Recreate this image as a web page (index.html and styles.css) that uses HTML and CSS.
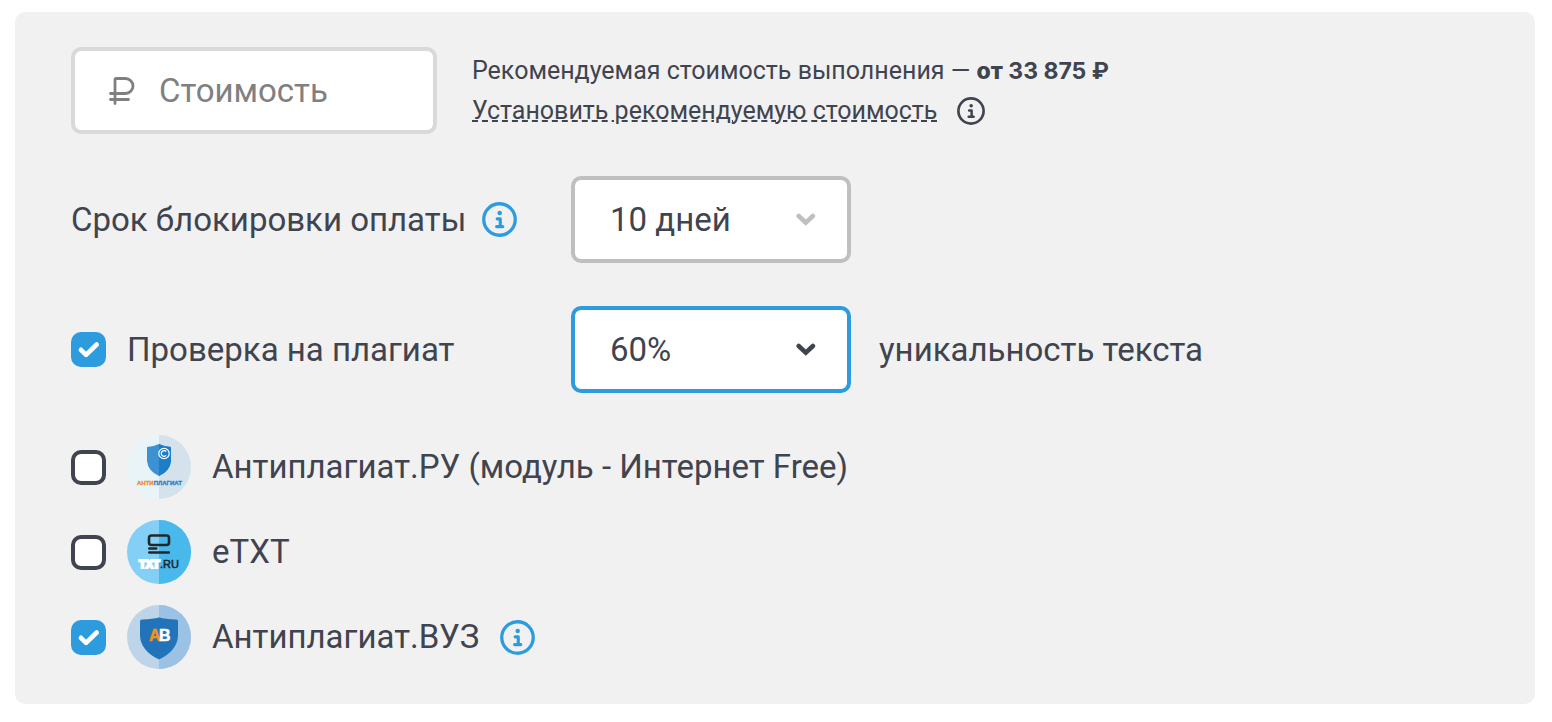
FILE: index.html
```
<!DOCTYPE html>
<html lang="ru">
  <head>
    <meta charset="UTF-8">
    <meta name="viewport" content="width=device-width, initial-scale=1">
    <title>Стоимость и проверка</title>
    <link rel="stylesheet" href="styles.css">
  </head>
  <body>
  <svg class="sprite" aria-hidden="true">
    <symbol id="info" viewBox="0 0 36 36">
      <circle cx="18" cy="18" r="16.200" fill="none" stroke="currentColor" stroke-width="3.400"/>
      <circle cx="18.200" cy="11.300" r="2.300" fill="currentColor"/>
      <path d="M15.600 17.300h3.200v7.500M15 25.300h6.400" fill="none" stroke="currentColor" stroke-width="3.200" stroke-linecap="round" stroke-linejoin="round"/>
    </symbol>
    <symbol id="arrow" viewBox="0 0 20 13">
      <path d="M2.700 3l7.100 6.600 7.100-6.600" fill="none" stroke="currentColor" stroke-width="4.600" stroke-linecap="round"/>
    </symbol>
    <symbol id="tick" viewBox="0 0 36 36">
      <path d="M10.200 18.300l5.300 5.200 10.900-10.600" fill="none" stroke="#fff" stroke-width="4.800" stroke-linecap="round" stroke-linejoin="round"/>
    </symbol>
  </svg>

  <form class="panel">
    <div class="row row-price">
      <label class="price-field">
        <svg class="rub" viewBox="0 0 26 28" aria-hidden="true">
          <path d="M6 26.500V2.500q0-1 1-1h9.500a7.500 7.500 0 0 1 0 15H1.500M1.500 22.500h18" fill="none" stroke="currentColor" stroke-width="2.800" stroke-linecap="round"/>
        </svg>
        <input class="price-input" type="text" placeholder="Стоимость" aria-label="Стоимость">
      </label>
      <div class="hint">
        <div>Рекомендуемая стоимость выполнения — <span class="sum"><b>от</b> 33 875 ₽</span></div>
        <div class="hint-line">
          <a class="hint-link" href="#">Установить рекомендуемую стоимость</a>
          <button class="info info-small" type="button" aria-label="Подробнее"><svg><use href="#info"/></svg></button>
        </div>
      </div>
    </div>

    <div class="row row-days">
      <div class="caption caption-info">
        <label for="days">Срок блокировки оплаты</label>
        <button class="info" type="button" aria-label="Подробнее"><svg><use href="#info"/></svg></button>
      </div>
      <div class="drop">
        <select id="days"><option>10 дней</option></select>
        <svg class="arrow"><use href="#arrow"/></svg>
      </div>
    </div>

    <div class="row row-check">
      <div class="caption">
        <span class="check">
          <input type="checkbox" id="plagiat" checked>
          <svg><use href="#tick"/></svg>
        </span>
        <label for="plagiat">Проверка на плагиат</label>
      </div>
      <div class="drop active">
        <select id="percent"><option>60%</option></select>
        <svg class="arrow"><use href="#arrow"/></svg>
      </div>
      <label class="after" for="percent">уникальность текста</label>
    </div>

    <div class="services">
      <div class="service">
        <span class="check">
          <input type="checkbox" id="antiplagiat">
          <svg><use href="#tick"/></svg>
        </span>
        <label for="antiplagiat">
          <svg class="logo" viewBox="0 0 64 64" aria-hidden="true">
            <circle cx="32" cy="32" r="32" fill="#e8f4f8"/>
            <path d="M32 0a32 32 0 0 1 0 64z" fill="#d5e2eb"/>
            <path d="M20 12q7-.4 12-3 5 2.600 12 3v14q-1 10-12 15-11-5-12-15z" fill="#3b91d1"/>
            <path d="M32 9q5 2.600 12 3v14q-1 10-12 15z" fill="#1b7fc8"/>
            <circle cx="37" cy="18.500" r="5.200" fill="none" stroke="#fff" stroke-width="1.200"/>
            <path d="M39.200 16.700a2.800 2.800 0 1 0 0 3.600" fill="none" stroke="#fff" stroke-width="1.200"/>
            <text class="logo-anti" x="10" y="50" fill="#f08b1d" stroke="#f08b1d">АНТИ<tspan fill="#1e82c8" stroke="#1e82c8">ПЛАГИАТ</tspan></text>
          </svg>
          Антиплагиат.РУ (модуль - Интернет Free)
        </label>
      </div>

      <div class="service">
        <span class="check">
          <input type="checkbox" id="etxt">
          <svg><use href="#tick"/></svg>
        </span>
        <label for="etxt">
          <svg class="logo" viewBox="0 0 64 64" aria-hidden="true">
            <circle cx="32" cy="32" r="32" fill="#83cff6"/>
            <path d="M32 0a32 32 0 0 1 0 64z" fill="#49b9eb"/>
            <g fill="none" stroke="#20282b" stroke-width="2.600" stroke-linecap="round">
              <rect x="22" y="15.500" width="20" height="9.500" rx="2.500"/>
              <path d="M22.300 28.500h7M22.300 32.500h19.500"/>
            </g>
            <text class="logo-txt" x="12" y="47.500" fill="#fff" stroke="#fff">TXT</text>
            <text class="logo-ru" x="33" y="47.500" fill="#17262e" stroke="#17262e">.RU</text>
          </svg>
          eTXT
        </label>
      </div>

      <div class="service">
        <span class="check">
          <input type="checkbox" id="vuz" checked>
          <svg><use href="#tick"/></svg>
        </span>
        <label for="vuz">
          <svg class="logo" viewBox="0 0 64 64" aria-hidden="true">
            <circle cx="32" cy="32" r="32" fill="#bdd4e9"/>
            <path d="M32 0a32 32 0 0 1 0 64z" fill="#9bc2e5"/>
            <path d="M13 16q0-1.500 2-1.500 11-.5 17-2 6 1.500 17 2 2 0 2 1.500v15q-1 15-19 23.500-18-8.500-19-23.500z" fill="#2273b9"/>
            <text class="logo-ab" x="22" y="36" fill="#f39314" stroke="#f39314">А<tspan x="32" fill="#fff" stroke="#fff">В</tspan></text>
          </svg>
          Антиплагиат.ВУЗ
        </label>
        <button class="info" type="button" aria-label="Подробнее"><svg><use href="#info"/></svg></button>
      </div>
    </div>
  </form>
  </body>
</html>
```
FILE: styles.css
```
* {
  box-sizing: border-box;
}

body {
  margin: 12px 17px 16px 15px;
  background: #fff;
  color: #3f444f;
  font-family: Roboto, "Noto Sans", sans-serif;
  font-size: 33px;
  line-height: 40px;
}

.sprite {
  display: none;
}

.panel {
  padding: 35px 56px;
  background: #f1f1f1;
  border-radius: 10px;
}

.row {
  display: flex;
  align-items: center;
}

.row-price {
  gap: 35px;
  margin-bottom: 42px;
}

.row-days {
  margin-bottom: 43px;
}

.row-check {
  margin-bottom: 42px;
}

/* price */
.price-field {
  display: flex;
  align-items: center;
  gap: 24px;
  width: 366px;
  height: 87px;
  padding: 0 34px;
  background: #fff;
  border: 4px solid #d9d9d9;
  border-radius: 10px;
  color: #808080;
}

.rub {
  flex: none;
  width: 26px;
  height: 28px;
}

.price-input {
  flex: 1;
  min-width: 0;
  padding: 0;
  border: 0;
  outline: 0;
  background: none;
  color: #3f444f;
  font: inherit;
}

.price-input::placeholder {
  color: #808080;
  opacity: 1;
}

.hint {
  font-size: 25px;
}

.sum {
  font-family: Inter, sans-serif;
  font-size: 23px;
  font-weight: 700;
}

.sum b {
  font-weight: 800;
}

.hint-line {
  display: flex;
  align-items: center;
  gap: 20px;
}

.hint-link {
  color: inherit;
  text-decoration: underline dashed 2px;
  text-underline-offset: 2px;
}

/* info button */
.info {
  flex: none;
  width: 35px;
  height: 35px;
  padding: 0;
  border: 0;
  background: none;
  color: #2d9cdf;
  cursor: pointer;
}

.info svg {
  display: block;
  width: 100%;
  height: 100%;
}

.info-small {
  width: 28px;
  height: 28px;
  color: #3f444f;
}

/* selects */
.caption {
  display: flex;
  align-items: center;
  gap: 21px;
  width: 500px;
}

.caption-info {
  gap: 16px;
}

.drop {
  position: relative;
  width: 280px;
  color: #bfbfbf;
}

.drop select {
  display: block;
  width: 100%;
  height: 87px;
  padding: 0 76px 0 35px;
  appearance: none;
  background: #fff;
  border: 4px solid #bfbfbf;
  border-radius: 10px;
  color: #3f444f;
  font: inherit;
}

.drop.active {
  color: #3f444f;
}

.drop.active select {
  border-color: #2d9cdf;
}

.arrow {
  position: absolute;
  right: 35px;
  top: 37px;
  width: 20px;
  height: 13px;
  pointer-events: none;
}

.after {
  margin-left: 28px;
}

/* checkboxes */
.check {
  display: grid;
  flex: none;
  width: 35px;
  height: 35px;
}

.check input,
.check svg {
  grid-area: 1 / 1;
  width: 35px;
  height: 35px;
  margin: 0;
}

.check input {
  appearance: none;
  background: #fff;
  border: 4px solid #3f444f;
  border-radius: 10px;
}

.check input:checked {
  background: #2d9cdf;
  border-color: #2d9cdf;
}

.check svg {
  visibility: hidden;
  pointer-events: none;
}

.check input:checked + svg {
  visibility: visible;
}

/* services */
.services {
  display: flex;
  flex-direction: column;
  gap: 21px;
}

.service,
.service label {
  display: flex;
  align-items: center;
  gap: 21px;
}

.logo {
  flex: none;
  width: 64px;
  height: 64px;
}

.logo text {
  font-family: "Liberation Sans", Arial, sans-serif;
  font-weight: bold;
}

.logo .logo-anti {
  font-size: 6px;
  stroke-width: 0.3px;
}

.logo .logo-txt {
  font-size: 11px;
  stroke-width: 2px;
}

.logo .logo-ru {
  font-size: 11px;
  font-weight: normal;
  stroke-width: 0.5px;
}

.logo .logo-ab {
  font-size: 16px;
  stroke-width: 0.5px;
}
```
